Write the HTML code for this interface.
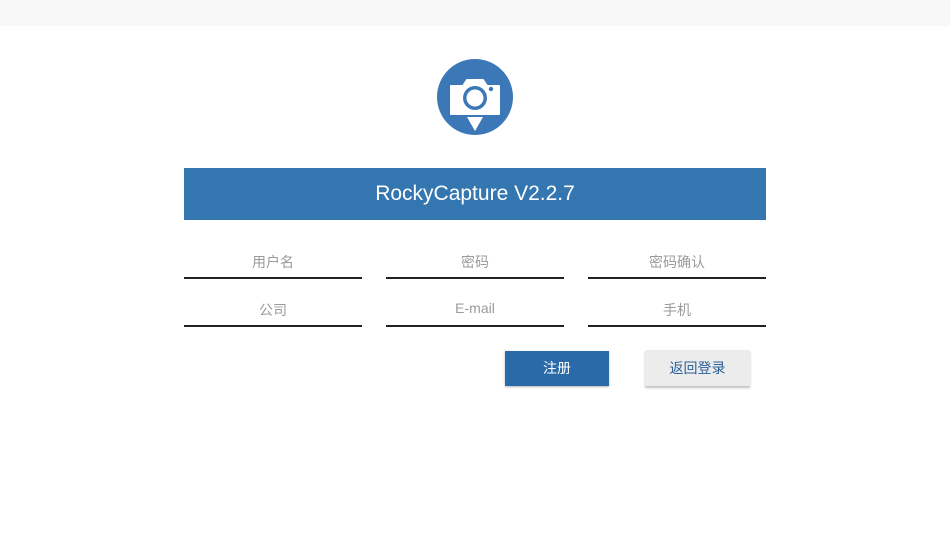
<!DOCTYPE html>
<html><head><meta charset="utf-8"><style>
html,body{margin:0;padding:0;width:950px;height:534px;background:#fff;overflow:hidden;font-family:"Liberation Sans","Noto Sans CJK SC",sans-serif;position:relative}
.sb{position:absolute;left:0;top:0;width:950px;height:26px;background:#f8f8f8}
.title{position:absolute;left:184px;top:168px;width:582px;height:52px;background:#3476b0;color:#fff;font-size:21px;line-height:52px;text-align:center}
.f{position:absolute;width:178px;height:2px;background:#222}
.l{position:absolute;width:178px;text-align:center;font-size:14px;color:#9a9a9a}
.b1{position:absolute;left:505px;top:351px;width:104px;height:35px;background:#2a6aa8;color:#fff;font-size:14px;line-height:35px;text-align:center;box-shadow:0 1px 2px rgba(0,0,0,.3)}
.b2{position:absolute;left:645px;top:350px;width:105px;height:36px;background:#ececec;color:#2b5f96;font-size:14px;line-height:36px;text-align:center;box-shadow:0 2px 2px rgba(0,0,0,.25)}
</style></head><body>
<div class="sb"></div>
<svg style="position:absolute;left:436px;top:58px" width="78" height="78" viewBox="0 0 78 78">
<circle cx="39" cy="39" r="38" fill="#3c78b8"/>
<path d="M15 28 h12 l4 -6 h16 l4 6 h12 v28 h-48 z" fill="#fff" stroke="#fff" stroke-width="2" stroke-linejoin="round"/>
<circle cx="39" cy="40" r="12" fill="#3c78b8"/>
<circle cx="39" cy="40" r="8.5" fill="#fff"/>
<circle cx="55" cy="31" r="2.2" fill="#3c78b8"/>
<path d="M31 59 h16 l-8 14 z" fill="#fff"/>
</svg>
<div class="title">RockyCapture V2.2.7</div>
<div class="l" style="left:184px;top:252px">用户名</div>
<div class="l" style="left:386px;top:252px">密码</div>
<div class="l" style="left:588px;top:252px">密码确认</div>
<div class="f" style="left:184px;top:277px"></div>
<div class="f" style="left:386px;top:277px"></div>
<div class="f" style="left:588px;top:277px"></div>
<div class="l" style="left:184px;top:300px">公司</div>
<div class="l" style="left:386px;top:300px">E-mail</div>
<div class="l" style="left:588px;top:300px">手机</div>
<div class="f" style="left:184px;top:325px"></div>
<div class="f" style="left:386px;top:325px"></div>
<div class="f" style="left:588px;top:325px"></div>
<div class="b1">注册</div>
<div class="b2">返回登录</div>
</body></html>
